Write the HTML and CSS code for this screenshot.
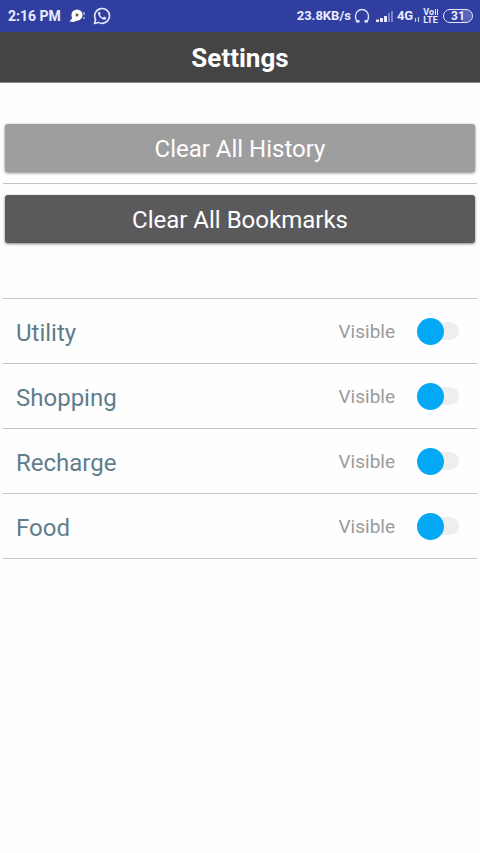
FILE: index.html
```html
<!DOCTYPE html>
<html lang="en">
<head>
<meta charset="utf-8">
<meta name="viewport" content="width=device-width, initial-scale=1">
<title>Settings</title>
<link rel="stylesheet" href="styles.css">
</head>
<body>
<div class="status">
  <div class="status-left">
    <span class="time">2:16 PM</span>
    <svg width="16" height="16" viewBox="0 0 16 16" aria-hidden="true">
      <circle cx="8" cy="7" r="5.600" fill="#fff"/>
      <path d="M4 9l-3.500 4.600 4 .4 5-2z" fill="#fff"/>
      <circle cx="8" cy="7" r="2.200" fill="#cfd6c4"/>
      <circle cx="8" cy="7" r="1.200" fill="#555a50"/>
      <path d="M15 4v3M15 9v2" stroke="#c5caf0" stroke-width="1.200"/>
    </svg>
    <svg width="18" height="18" viewBox="0 0 18 18" aria-hidden="true">
      <path d="M1.500 16.500l1.100-4A7.400 7.400 0 1 1 5.500 15.400z" fill="none" stroke="#e4e7ff" stroke-width="1.600" stroke-linejoin="round"/>
      <path d="M6.200 4.800c-1.200.5-1.500 1.900-.8 3.300 1 2.100 2.700 3.700 4.700 4.500 1.400.5 2.700.1 3-1.200l.1-.8-2.200-1.100-1.100 1.200c-1.400-.6-2.400-1.600-3-2.900l.8-1-.9-2z" fill="#e4e7ff"/>
    </svg>
  </div>
  <div class="status-right">
    <span class="speed">23.8KB/s</span>
    <svg class="headphones" width="16" height="16" viewBox="0 0 16 16" aria-hidden="true">
      <path d="M5 13.500H2.800C1.800 12 1.500 10 1.500 8a6.500 6.500 0 0 1 13 0c0 2-.3 4-1.300 5.500H11" fill="none" stroke="#dfe3ff" stroke-width="1.400"/>
      <path d="M2.500 12h3v2.500h-3zM10.500 12h3v2.500h-3z" fill="#dfe3ff"/>
    </svg>
    <svg class="signal" width="18" height="14" viewBox="0 0 18 14" aria-hidden="true">
      <path d="M0 10.500h3V13H0zM4 9h3v4H4zM8 7h3v6H8z" fill="#e4e7ff"/>
      <path d="M12 4h2v9h-2zM15 2h2v11h-2z" fill="#7b82cc"/>
    </svg>
    <span class="network">4G</span>
    <svg class="data" width="6" height="14" viewBox="0 0 6 14" aria-hidden="true">
      <path d="M1.500 9v4M4.500 8v5" stroke="#c5caf0" stroke-width="1.200"/>
    </svg>
    <span class="volte"><span>Vo<i></i><i></i></span><span>LTE</span></span>
    <span class="battery">31</span>
  </div>
</div>
<header class="bar"><h1>Settings</h1></header>
<main>
  <div class="actions">
    <div class="action"><button class="btn btn-light" type="button">Clear All History</button></div>
    <div class="action"><button class="btn btn-dark" type="button">Clear All Bookmarks</button></div>
  </div>
  <ul class="list">
    <li><label class="row"><span class="name">Utility</span><span class="state">Visible</span><input class="switch" type="checkbox" role="switch"></label></li>
    <li><label class="row"><span class="name">Shopping</span><span class="state">Visible</span><input class="switch" type="checkbox" role="switch"></label></li>
    <li><label class="row"><span class="name">Recharge</span><span class="state">Visible</span><input class="switch" type="checkbox" role="switch"></label></li>
    <li><label class="row"><span class="name">Food</span><span class="state">Visible</span><input class="switch" type="checkbox" role="switch"></label></li>
  </ul>
</main>
</body>
</html>
```
FILE: styles.css
```css
* { box-sizing: border-box; }

body {
  margin: 0;
  background: #fefefe;
  font-family: Roboto, "Liberation Sans", sans-serif;
}

.status {
  display: flex;
  justify-content: space-between;
  align-items: center;
  height: 32px;
  padding: 0 7px 0 8px;
  background: #303f9f;
  color: #e9ecff;
  font-size: 13px;
  font-weight: 700;
  line-height: 16px;
}

.status-left,
.status-right {
  display: flex;
  align-items: center;
}

.status-left { gap: 8px; }
.time { font-size: 14px; }
.headphones { margin-left: 3px; }
.signal { margin-left: 6px; }
.network { margin-left: 3px; }
.data { margin-left: 1px; }

.volte {
  display: flex;
  flex-direction: column;
  margin-left: 3px;
  font-size: 9px;
  line-height: 8px;
}

.volte span {
  display: flex;
  align-items: center;
  height: 8px;
}

.volte i {
  width: 1px;
  height: 6px;
  margin-left: 1px;
  background: #e9ecff;
}

.battery {
  width: 30px;
  height: 14px;
  margin-left: 5px;
  border: 1px solid #e4e7ff;
  border-radius: 7px;
  background: linear-gradient(90deg, transparent 66%, #5964b8 66%);
  font-size: 12px;
  line-height: 12px;
  text-align: center;
}

.bar {
  height: 51px;
  border-bottom: 1px solid #8a8a8a;
  background: #444;
  text-align: center;
}

.bar h1 {
  margin: 0;
  color: #fff;
  font-size: 26px;
  font-weight: 700;
  line-height: 53px;
}

.actions { padding: 30px 3px 44px; }
.action { padding: 11px 2px; }
.action + .action { border-top: 1px solid #c4c4c4; }

.btn {
  display: block;
  width: 100%;
  height: 48px;
  padding: 2px 0 0;
  border: 0;
  border-radius: 3px;
  box-shadow: 0 1px 3px rgba(0, 0, 0, 0.5);
  color: #fff;
  font: 400 24px/46px Roboto, "Liberation Sans", sans-serif;
}

.btn-light { background: #9e9e9e; }
.btn-dark { background: #5a5a5c; }

.list {
  margin: 0 3px;
  padding: 0;
  border-top: 1px solid #c4c4c4;
  list-style: none;
}

.list li { border-bottom: 1px solid #c4c4c4; }

.row {
  display: flex;
  align-items: center;
  height: 64px;
  padding: 0 18px 0 13px;
}

.name {
  flex: 1;
  padding-top: 3px;
  color: #607d8b;
  font-size: 24px;
  line-height: 30px;
}

.state {
  padding-top: 2px;
  margin-right: 22px;
  color: #9b9b9b;
  font-size: 19px;
  line-height: 24px;
}

.switch {
  display: flex;
  align-items: center;
  appearance: none;
  width: 42px;
  height: 18px;
  margin: 0;
  border-radius: 9px;
  background: #eee;
}

.switch::before {
  content: "";
  width: 27px;
  height: 27px;
  flex: none;
  border-radius: 50%;
  background: #03a9f4;
}

.switch:checked { justify-content: flex-end; }
```
